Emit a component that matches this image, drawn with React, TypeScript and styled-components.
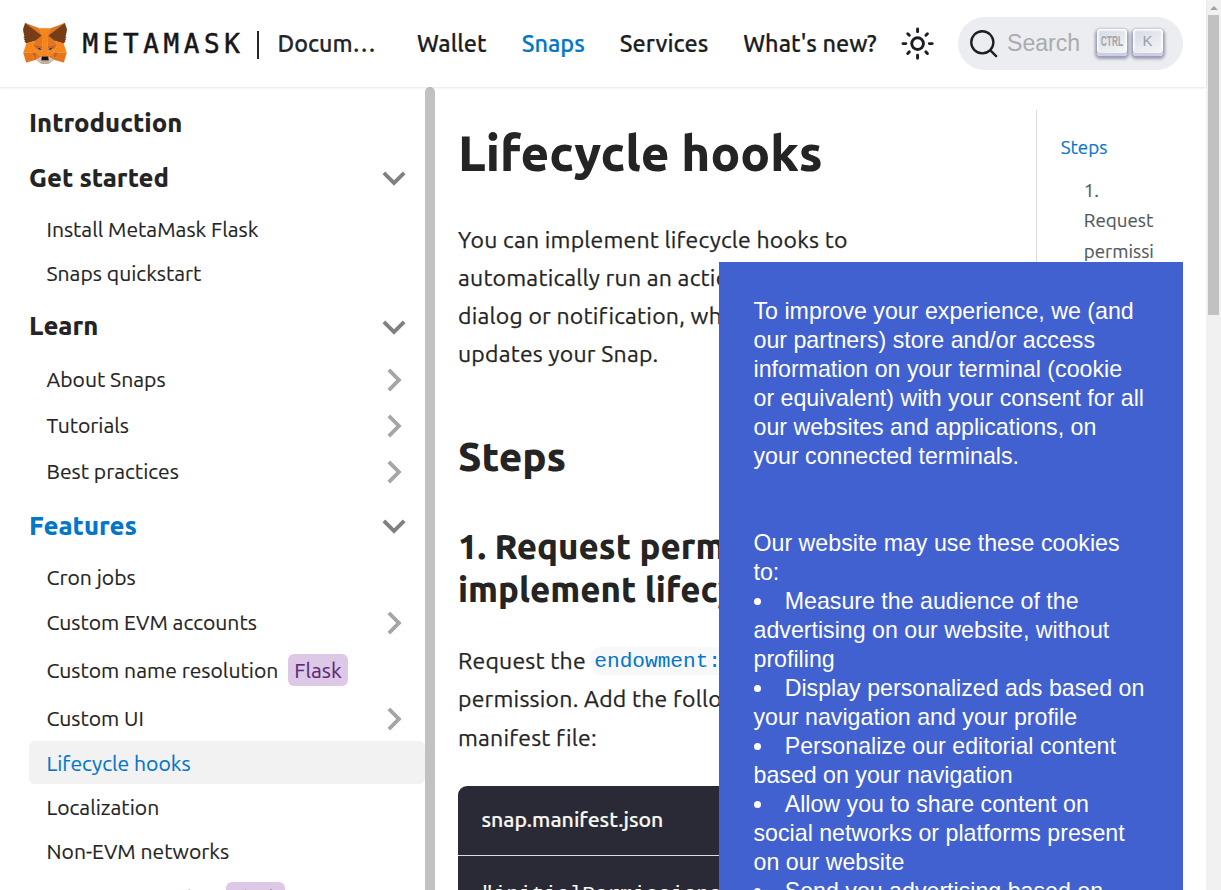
import React from "react";
import styled, { createGlobalStyle, css } from "styled-components";

const sans = `Ubuntu, "Noto Sans", sans-serif`;
const arial = `"Liberation Sans", Arial, sans-serif`;
const mono = `"Liberation Mono", monospace`;

const GlobalStyle = createGlobalStyle`
  *, *::before, *::after { box-sizing: border-box; }
  body { margin: 0; background: #fff; color: #24272a; font-family: ${sans}; font-size: 23.47px; overflow: hidden; }
  a { color: inherit; text-decoration: none; }
  svg { display: block; flex: none; }
`;

const Frame = styled.div`
  display: flex;
  width: 1221px;
  height: 890px;
  overflow: hidden;
`;
const Page = styled.div`
  flex: 1;
  min-width: 0;
  display: flex;
  flex-direction: column;
`;

/* window scrollbar */
const ScrollTrack = styled.div`
  width: 15px;
  background: #f1f1f1;
  display: flex;
  flex-direction: column;
  align-items: center;
`;
const ScrollArrow = styled.div`
  height: 15px;
  display: flex;
  align-items: center;
  &::after {
    content: "";
    border: 4px solid transparent;
    border-top: 0;
    border-bottom-color: #a3a3a3;
  }
`;
const ScrollThumb = styled.div`
  width: 11px;
  height: 300px;
  background: #c1c1c1;
`;

/* top bar */
const Navbar = styled.header`
  height: 87px;
  flex: none;
  display: flex;
  align-items: center;
  padding: 0 23px;
  box-shadow: 0 1px 2px 0 rgba(0, 0, 0, 0.1);
  position: relative;
  z-index: 1;
`;
const Wordmark = styled.span`
  margin-left: 15.5px;
  width: 160.5px;
  font-family: "DejaVu Sans Mono", monospace;
  font-size: 26px;
  letter-spacing: 4.6px;
  line-height: 30px;
  color: #161616;
  -webkit-text-stroke: 0.5px #161616;
  white-space: nowrap;
`;
const Divider = styled.span`
  width: 2px;
  height: 28px;
  margin: 2px 0 0 14px;
  background: #24272a;
`;
const SiteTitle = styled.b`
  width: 103px;
  margin: -2px 0 0 18.5px;
  font-weight: 500;
  font-size: 23.3px;
  -webkit-text-stroke: 0.2px;
  overflow: hidden;
  text-overflow: ellipsis;
  white-space: nowrap;
`;
const NavLinks = styled.nav`
  display: flex;
  gap: 35px;
  margin: -2px 0 0 36.5px;
  font-weight: 500;
  -webkit-text-stroke: 0.2px;
  white-space: nowrap;
`;
const NavLink = styled.a<{ $active?: boolean }>`
  color: ${p => (p.$active ? "#0376c9" : "#1c1e21")};
`;
const ThemeToggle = styled.button`
  border: 0;
  padding: 0;
  background: none;
  color: #1c1e21;
  margin-left: auto;
`;
const Search = styled.div`
  margin-left: 23px;
  width: 225px;
  height: 53px;
  border-radius: 27px;
  background: #ebedf0;
  display: flex;
  align-items: center;
  padding: 0 20.5px 0 11px;
  font-family: ${arial};
  font-size: 23.1px;
`;
const SearchLabel = styled.span`
  flex: 1;
  margin-left: 8.6px;
  color: #a9abae;
`;
const Key = styled.kbd<{ $narrow?: boolean }>`
  width: 30px;
  height: 27px;
  margin: -2px 0 0 5.5px;
  padding-bottom: 5px;
  border-radius: 4px;
  display: flex;
  align-items: center;
  justify-content: center;
  font: 400 15px/1 ${arial};
  color: #9b9fa8;
  background: linear-gradient(-26.5deg, #f8f8f8, #d5dbe4);
  box-shadow: inset 0 -3px 0 0 #cdcde6, inset 0 0 1.5px 1.5px #fff,
    0 1.5px 3px 1.5px rgba(30, 35, 90, 0.4);
  ${p => p.$narrow && css`
    padding-bottom: 4px;
    font: 700 15px/1 ${arial};
    color: #a3a6ac;
    span { transform: scaleX(0.56); }
  `}
`;

/* body columns */
const Columns = styled.div`
  flex: 1;
  min-height: 0;
  display: flex;
`;
const Sidebar = styled.aside`
  width: 435px;
  flex: none;
  display: flex;
`;
const Menu = styled.ul`
  flex: 1;
  margin: 0;
  padding: 4px 0 0 29px;
  list-style: none;
`;
const SubMenu = styled.ul`
  margin: 0;
  padding: 5.4px 0 0;
  list-style: none;
`;
const MenuThumb = styled.div`
  width: 10px;
  border-radius: 5px 5px 0 0;
  background: #c1c1c1;
`;
const rowKinds = {
  section: css`height: 48px; margin-top: 7.2px; font-size: 25.6px; font-weight: 800;`,
  leaf: css`height: 43px; margin-top: 0.8px; padding-left: 17.5px; -webkit-text-stroke: 0.15px;`,
  group: css`height: 45px; margin-top: 1.35px; padding-left: 17.5px; -webkit-text-stroke: 0.15px;`,
  tagged: css`height: 48px; margin-top: 1.6px; padding-left: 17.5px; -webkit-text-stroke: 0.15px;`,
};
type Kind = keyof typeof rowKinds;
const Row = styled.a<{ $kind: Kind; $active?: boolean; $current?: boolean }>`
  display: flex;
  align-items: center;
  font-size: 21.12px;
  border-radius: 6px;
  white-space: nowrap;
  color: ${p => (p.$active ? "#0376c9" : "#242424")};
  background: ${p => (p.$current ? "#f2f2f2" : "transparent")};
  ${p => rowKinds[p.$kind]}
`;
const Caret = styled.svg<{ $open?: boolean }>`
  width: 46px;
  height: 46px;
  margin: 2px 8.4px 0 auto;
  color: ${p => (p.$open ? "#808080" : "#a6a6a6")};
  transform: rotate(${p => (p.$open ? 180 : 90)}deg);
`;
const Tag = styled.span`
  height: 32px;
  margin-left: 10px;
  padding: 0 6px;
  border-radius: 6px;
  line-height: 32px;
  background: #dec8e8;
  color: #5b2b76;
`;

const Article = styled.main`
  width: 578px;
  flex: none;
  padding: 35px 0 0 23px;
  color: #242424;
  white-space: nowrap;
`;
const H1 = styled.h1`
  margin: 0 0 37px;
  font-size: 49.3px;
  font-weight: 800;
  line-height: 62px;
`;
const P = styled.p`
  margin: 0;
  font-size: 23px;
  letter-spacing: 0.22px;
  line-height: 38.15px;
  -webkit-text-stroke: 0.25px;
`;
const ManifestIntro = styled(P)`
  line-height: 38.6px;
`;
const H2 = styled.h2`
  margin: 57.5px 0 42.5px;
  font-size: 40.4px;
  font-weight: 800;
  line-height: 51px;
`;
const H3 = styled.h3`
  margin: 0 0 31px;
  font-size: 34.75px;
  font-weight: 800;
  line-height: 43px;
`;
const Code = styled.code`
  font: 21.12px/1 ${mono};
  letter-spacing: 0;
  vertical-align: 2px;
  color: #0376c9;
  background: #f6f8fa;
  border-radius: 9px;
  padding: 2px 3px;
  -webkit-text-stroke: 0;
`;
const CodeBlock = styled.div`
  margin-top: 29px;
  height: 300px;
  border-radius: 9px;
  background: #292a36;
  color: #f8f8f2;
`;
const CodeTitle = styled.div`
  height: 70px;
  padding: 0 23.5px;
  line-height: 67px;
  font-size: 21.25px;
  font-weight: 500;
  -webkit-text-stroke: 0.2px;
  border-bottom: 1px solid #dadde1;
`;
const Pre = styled.pre`
  margin: 0;
  padding: 22.5px 23px;
  font: 21.12px/30px ${mono};
`;

const Toc = styled.aside`
  width: 150px;
  height: 400px;
  margin: 23px 0 0 23px;
  border-left: 1px solid #dadde1;
  padding: 22px 0 0 23.7px;
  font-size: 18.78px;
  line-height: 30.5px;
  color: #525860;
  -webkit-text-stroke: 0.15px;
`;
const TocLink = styled.a<{ $nested?: boolean }>`
  display: block;
  ${p => (p.$nested
    ? css`margin: 12px 0 0 23.1px; width: 72px; overflow-wrap: anywhere;`
    : css`color: #0376c9;`)}
`;

/* consent notice floating above the page */
const Consent = styled.section`
  position: fixed;
  left: 719px;
  top: 262px;
  width: 464px;
  height: 628px;
  overflow: hidden;
  z-index: 5;
  padding: 35px 34.5px 0;
  background: #4261d1;
  color: #fff;
  font: 23.2px/29px ${arial};
  white-space: pre;
`;
const ConsentText = styled.p`
  margin: 0;
  & + & { margin-top: 58px; }
`;
const ConsentList = styled.ul`
  margin: 0;
  padding: 0;
  list-style: disc inside;
`;

const FOX: [string, string][] = [
  ["#e2761b", "274.1,35.5 174.6,109.4 193,65.8"],
  ["#e4761b", "44.4,35.5 143.1,110.1 125.6,65.8"],
  ["#e4761b", "238.3,206.8 211.8,247.4 268.5,263 284.8,207.7"],
  ["#e4761b", "33.9,207.7 50.1,263 106.8,247.4 80.3,206.8"],
  ["#e4761b", "103.6,138.2 87.8,162.1 144.1,164.6 142.1,104.1"],
  ["#e4761b", "214.9,138.2 175.9,103.4 174.6,164.6 230.8,162.1"],
  ["#e4761b", "106.8,247.4 140.6,230.9 111.4,208.1"],
  ["#e4761b", "177.9,230.9 211.8,247.4 207.1,208.1"],
  ["#d7c1b3", "211.8,247.4 177.9,230.9 180.6,253 180.3,262.3"],
  ["#d7c1b3", "106.8,247.4 138.3,262.3 138.1,253 140.6,230.9"],
  ["#233447", "138.8,193.5 110.6,185.2 130.5,176.1"],
  ["#233447", "179.7,193.5 188,176.1 208,185.2"],
  ["#cd6116", "106.8,247.4 111.6,206.8 80.3,207.7"],
  ["#cd6116", "207,206.8 211.8,247.4 238.3,207.7"],
  ["#cd6116", "230.8,162.1 174.6,164.6 179.8,193.5 188.1,176.1 208.1,185.2"],
  ["#cd6116", "110.6,185.2 130.6,176.1 138.8,193.5 144.1,164.6 87.8,162.1"],
  ["#e4751f", "87.8,162.1 111.4,208.1 110.6,185.2"],
  ["#e4751f", "208.1,185.2 207.1,208.1 230.8,162.1"],
  ["#e4751f", "144.1,164.6 138.8,193.5 145.4,227.6 146.9,182.7"],
  ["#e4751f", "174.6,164.6 171.9,182.6 173.1,227.6 179.8,193.5"],
  ["#f6851b", "179.8,193.5 173.1,227.6 177.9,230.9 207.1,208.1 208.1,185.2"],
  ["#f6851b", "110.6,185.2 111.4,208.1 140.6,230.9 145.4,227.6 138.8,193.5"],
  ["#c0ad9e", "180.3,262.3 180.6,253 178.1,250.8 140.4,250.8 138.1,253 138.3,262.3 106.8,247.4 117.8,256.4 140.1,271.9 178.4,271.9 200.8,256.4 211.8,247.4"],
  ["#161616", "177.9,230.9 173.1,227.6 145.4,227.6 140.6,230.9 138.1,253 140.4,250.8 178.1,250.8 180.6,253"],
  ["#763d16", "278.3,114.2 286.8,73.4 274.1,35.5 177.9,106.9 214.9,138.2 267.2,153.5 278.8,140 273.8,136.4 281.8,129.1 275.6,124.3 283.6,118.2"],
  ["#763d16", "31.8,73.4 40.3,114.2 34.9,118.2 42.9,124.3 36.8,129.1 44.8,136.4 39.8,140 51.3,153.5 103.6,138.2 140.6,106.9 44.4,35.5"],
  ["#f6851b", "267.2,153.5 214.9,138.2 230.8,162.1 207.1,208.1 238.3,207.7 284.8,207.7"],
  ["#f6851b", "103.6,138.2 51.3,153.5 33.9,207.7 80.3,207.7 111.4,208.1 87.8,162.1"],
  ["#f6851b", "174.6,164.6 177.9,106.9 193.1,65.8 125.6,65.8 140.6,106.9 144.1,164.6 145.3,182.8 145.4,227.6 173.1,227.6 173.3,182.8"],
];
const Fox = () => (
  <svg width="44" height="41" viewBox="31.8 35.5 255 236.5" preserveAspectRatio="none">
    {FOX.map(([fill, points], i) => (
      <polygon key={i} fill={fill} stroke={fill} strokeWidth="1" strokeLinejoin="round" points={points} />
    ))}
  </svg>
);

const Sun = () => (
  <svg width="35.2" height="35.2" viewBox="0 0 24 24" fill="none" stroke="currentColor" strokeWidth="2" strokeLinecap="round">
    <circle cx="12" cy="12" r="4" />
    <path d="M2 12h2M20 12h2M12 2v2M12 20v2M5.28 5.28l1.06 1.06M17.66 17.66l1.06 1.06M18.72 5.28l-1.06 1.06M6.34 17.66l-1.06 1.06" />
  </svg>
);

const Magnifier = () => (
  <svg width="29.4" height="29.4" viewBox="0 0 20 20" fill="none" stroke="#1c1e21" strokeWidth="1.6" strokeLinecap="round" strokeLinejoin="round">
    <path d="M14.386 14.386l4.0877 4.0877-4.0877-4.0877c-2.9418 2.9419-7.7115 2.9419-10.6533 0-2.9419-2.9418-2.9419-7.7115 0-10.6533 2.9418-2.9419 7.7115-2.9419 10.6533 0 2.9419 2.9418 2.9419 7.7115 0 10.6533z" />
  </svg>
);

interface Entry { label: string; kind: Kind; caret?: "open" | "closed"; active?: boolean; current?: boolean; tag?: string; items?: Entry[] }
const MENU: Entry[] = [
  { label: "Introduction", kind: "section" },
  {
    label: "Get started", kind: "section", caret: "open", items: [
      { label: "Install MetaMask Flask", kind: "leaf" },
      { label: "Snaps quickstart", kind: "leaf" },
    ],
  },
  {
    label: "Learn", kind: "section", caret: "open", items: [
      { label: "About Snaps", kind: "group", caret: "closed" },
      { label: "Tutorials", kind: "group", caret: "closed" },
      { label: "Best practices", kind: "group", caret: "closed" },
    ],
  },
  {
    label: "Features", kind: "section", caret: "open", active: true, items: [
      { label: "Cron jobs", kind: "leaf" },
      { label: "Custom EVM accounts", kind: "group", caret: "closed" },
      { label: "Custom name resolution", kind: "tagged", tag: "Flask" },
      { label: "Custom UI", kind: "group", caret: "closed" },
      { label: "Lifecycle hooks", kind: "leaf", active: true, current: true },
      { label: "Localization", kind: "leaf" },
      { label: "Non-EVM networks", kind: "leaf" },
      { label: "Signature insights", kind: "tagged", tag: "Flask" },
    ],
  },
];

const MenuEntry = ({ entry }: { entry: Entry }) => (
  <li>
    <Row $kind={entry.kind} $active={entry.active} $current={entry.current}>
      {entry.label}
      {entry.tag && <Tag>{entry.tag}</Tag>}
      {entry.caret && (
        <Caret viewBox="0 0 24 24" $open={entry.caret === "open"}>
          <path fill="currentColor" d="M7.41 15.41L12 10.83l4.59 4.58L18 14l-6-6-6 6z" />
        </Caret>
      )}
    </Row>
    {entry.items && (
      <SubMenu>{entry.items.map(e => <MenuEntry key={e.label} entry={e} />)}</SubMenu>
    )}
  </li>
);

const NOTICE = [
  "To improve your experience, we (and\nour partners) store and/or access\ninformation on your terminal (cookie\nor equivalent) with your consent for all\nour websites and applications, on\nyour connected terminals.",
  "Our website may use these cookies\nto:",
];
const USES = [
  "Measure the audience of the\nadvertising on our website, without\nprofiling",
  "Display personalized ads based on\nyour navigation and your profile",
  "Personalize our editorial content\nbased on your navigation",
  "Allow you to share content on\nsocial networks or platforms present\non our website",
  "Send you advertising based on",
];

export default function App() {
  return (
    <Frame>
      <GlobalStyle />
      <Page>
        <Navbar>
          <Fox />
          <Wordmark>METAMASK</Wordmark>
          <Divider />
          <SiteTitle>Documentation</SiteTitle>
          <NavLinks>
            <NavLink>Wallet</NavLink>
            <NavLink $active>Snaps</NavLink>
            <NavLink>Services</NavLink>
            <NavLink>What's new?</NavLink>
          </NavLinks>
          <ThemeToggle aria-label="Switch theme"><Sun /></ThemeToggle>
          <Search>
            <Magnifier />
            <SearchLabel>Search</SearchLabel>
            <Key $narrow><span>CTRL</span></Key>
            <Key>K</Key>
          </Search>
        </Navbar>
        <Columns>
          <Sidebar>
            <Menu>{MENU.map(m => <MenuEntry key={m.label} entry={m} />)}</Menu>
            <MenuThumb />
          </Sidebar>
          <Article>
            <H1>Lifecycle hooks</H1>
            <P>
              You can implement lifecycle hooks to<br />
              automatically run an action, such as displaying a<br />
              dialog or notification, when a user installs or<br />
              updates your Snap.
            </P>
            <H2>Steps</H2>
            <H3>1. Request permission and<br />implement lifecycle hooks</H3>
            <ManifestIntro>
              Request the <Code>endowment:lifecycle-hooks</Code><br />
              permission. Add the following to your Snap's<br />
              manifest file:
            </ManifestIntro>
            <CodeBlock>
              <CodeTitle>snap.manifest.json</CodeTitle>
              <Pre>{`"initialPermissions": {`}</Pre>
            </CodeBlock>
          </Article>
          <Toc>
            <TocLink>Steps</TocLink>
            <TocLink $nested>1. Request permission</TocLink>
          </Toc>
        </Columns>
      </Page>
      <ScrollTrack>
        <ScrollArrow />
        <ScrollThumb />
      </ScrollTrack>
      <Consent>
        {NOTICE.map(t => <ConsentText key={t}>{t}</ConsentText>)}
        <ConsentList>{USES.map(t => <li key={t}>{t}</li>)}</ConsentList>
      </Consent>
    </Frame>
  );
}
